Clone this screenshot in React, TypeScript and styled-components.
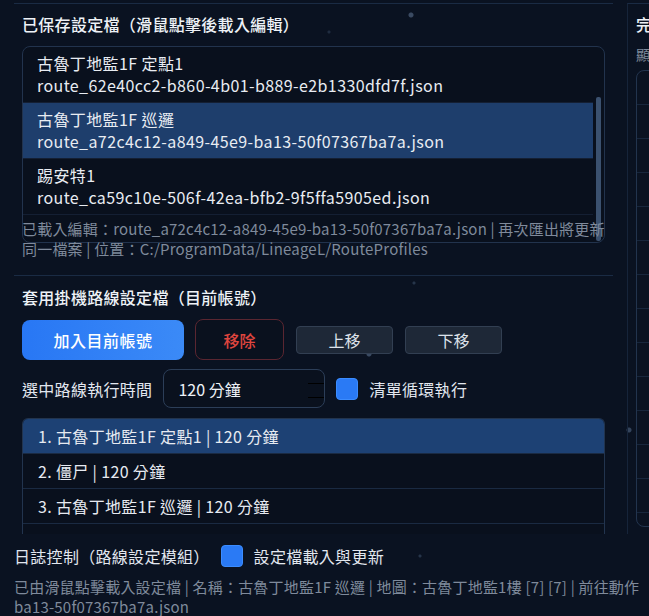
import React, { useState } from "react";
import styled, { createGlobalStyle } from "styled-components";

const GlobalStyle = createGlobalStyle`
  html, body {
    margin: 0;
    overflow: hidden;
    background-color: #0a1221;
    background-image:
      radial-gradient(circle at 411px 15px, #3a4a62 2px, transparent 3px),
      radial-gradient(circle at 369px 354px, #3a4a62 2px, transparent 3px),
      radial-gradient(circle at 629px 430px, #34445c 2px, transparent 3px),
      radial-gradient(circle at 414px 283px, #26354a 1px, transparent 2px),
      radial-gradient(circle at 420px 556px, #26354a 1px, transparent 2px),
      radial-gradient(circle at 329px 32px, #1f2c40 1px, transparent 2px);
  }
  body {
    font-family: "Noto Sans CJK TC", "Noto Sans", sans-serif;
    color: #e4e9f1;
  }
`;

const Page = styled.div`
  display: flex;
  flex-direction: column;
  width: 960px;
  padding: 3px 0 0 14px;
`;

const Main = styled.div`
  display: flex;
  gap: 14px;
`;

const LeftPanel = styled.div`
  width: 599px;
  display: flex;
  flex-direction: column;
`;

const Section = styled.div<{ $padTop: number; $padBottom: number }>`
  display: flex;
  flex-direction: column;
  border-top: 1px solid #1a2b44;
  padding: ${(p) => p.$padTop}px 8px ${(p) => p.$padBottom}px;
`;

const Title = styled.div`
  font-size: 16px;
  line-height: 22px;
  font-weight: 500;
  letter-spacing: 0.3px;
  color: #eef2f7;
  white-space: nowrap;
`;

const ProfileList = styled.div`
  display: flex;
  margin-top: 11px;
  height: 197px;
  box-sizing: border-box;
  border: 1px solid #22334d;
  border-radius: 8px;
  background: #09101d;
  overflow: hidden;
`;

const ProfileItems = styled.div`
  flex: 1;
  display: flex;
  flex-direction: column;
`;

const ProfileItem = styled.div<{ $selected?: boolean }>`
  padding: 5px 14px 6px;
  font-size: 16px;
  line-height: 22px;
  letter-spacing: 0.4px;
  color: #e8ecf2;
  background: ${(p) => (p.$selected ? "#1e3e6c" : "transparent")};
  border-bottom: 1px solid #141f33;
  cursor: pointer;
  white-space: nowrap;
`;

const ScrollTrack = styled.div`
  width: 11px;
  display: flex;
  justify-content: center;
`;

const ScrollThumb = styled.div`
  width: 5px;
  height: 144px;
  margin-top: 50px;
  border-radius: 2px;
  background: #3b516f;
`;

const MutedText = styled.div`
  font-size: 15px;
  line-height: 20px;
  letter-spacing: 0.2px;
  color: #7f8a9b;
  white-space: nowrap;
`;

const StatusText = styled(MutedText)`
  margin-top: -24px;
`;

const Line = styled.span`
  display: block;
`;

const ButtonRow = styled.div`
  display: flex;
  align-items: center;
  gap: 11px;
  margin-top: 11px;
`;

const PrimaryButton = styled.button`
  width: 162px;
  height: 40px;
  border: none;
  border-radius: 8px;
  background: linear-gradient(90deg, #2877f4, #3b8af7);
  color: #ffffff;
  font: 500 16px "Noto Sans CJK TC", sans-serif;
  letter-spacing: 0.5px;
  cursor: pointer;
`;

const DangerButton = styled.button`
  width: 89px;
  height: 41px;
  border: 1px solid #5a2631;
  border-radius: 8px;
  background: #0a111e;
  color: #e0463f;
  font: 500 16px "Noto Sans CJK TC", sans-serif;
  cursor: pointer;
`;

const SecondaryButton = styled.button`
  width: 97px;
  height: 28px;
  margin-left: 1px;
  border: 1px solid #323f52;
  border-radius: 4px;
  background: #1e2837;
  color: #dde2ea;
  font: 16px "Noto Sans CJK TC", sans-serif;
  cursor: pointer;
`;

const TimeRow = styled.div`
  display: flex;
  align-items: center;
  margin-top: 9px;
`;

const Label = styled.span`
  font-size: 16px;
  letter-spacing: 0.3px;
  color: #e2e7ef;
  white-space: nowrap;
`;

const TimeInput = styled.div`
  position: relative;
  display: flex;
  align-items: center;
  width: 162px;
  height: 39px;
  margin-left: 11px;
  box-sizing: border-box;
  padding-left: 14px;
  border: 1px solid #2c3e58;
  border-radius: 8px;
  background: #0a111e;
  font-size: 16px;
  color: #eef2f7;
`;

const SpinStub = styled.span`
  position: absolute;
  right: 0;
  top: 13px;
  width: 16px;
  height: 13px;
  border-top: 1px solid #000000;
  border-bottom: 1px solid #000000;
`;

const Check = styled.span`
  width: 22px;
  height: 22px;
  margin: 0 11px;
  box-sizing: border-box;
  border: 1px solid #3b8cff;
  border-radius: 4px;
  background: #2a7af5;
  flex-shrink: 0;
`;

const QueueBox = styled.div`
  margin-top: 10px;
  height: 116px;
  box-sizing: border-box;
  border: 1px solid #22344e;
  border-bottom: none;
  border-radius: 6px 6px 0 0;
  overflow: hidden;
  background: #09101d;
`;

const QueueItem = styled.div<{ $selected?: boolean }>`
  padding: 6px 15px;
  font-size: 16px;
  line-height: 22px;
  letter-spacing: 0.35px;
  color: #e6eaf1;
  background: ${(p) => (p.$selected ? "#1d4174" : "transparent")};
  border-bottom: 1px solid #1a2a42;
  white-space: nowrap;
`;

const RightPanel = styled.div`
  width: 320px;
  display: flex;
  flex-direction: column;
  border-top: 1px solid #1a2b44;
  border-left: 1px solid #16243a;
  padding: 9px 8px 0;
`;

const SubText = styled.div`
  margin-top: 9px;
  font-size: 14px;
  line-height: 20px;
  color: #7f8a9b;
  white-space: nowrap;
`;

const StepTable = styled.div`
  margin-top: 6px;
  height: 457px;
  box-sizing: border-box;
  border: 1px solid #22344e;
  border-radius: 8px;
  overflow: hidden;
`;

const StepRow = styled.div`
  height: 34px;
  box-sizing: border-box;
  border-bottom: 1px solid #17263c;
`;

const Footer = styled.div`
  display: flex;
  flex-direction: column;
  margin-top: 10px;
`;

const LogRow = styled.div`
  display: flex;
  align-items: center;
  height: 24px;
`;

const LogText = styled(MutedText)`
  margin-top: 9px;
`;

const profiles = [
  { name: "古魯丁地監1F 定點1", file: "route_62e40cc2-b860-4b01-b889-e2b1330dfd7f.json" },
  { name: "古魯丁地監1F 巡邏", file: "route_a72c4c12-a849-45e9-ba13-50f07367ba7a.json" },
  { name: "踢安特1", file: "route_ca59c10e-506f-42ea-bfb2-9f5ffa5905ed.json" },
];

const queue = [
  "1. 古魯丁地監1F 定點1 | 120 分鐘",
  "2. 僵尸 | 120 分鐘",
  "3. 古魯丁地監1F 巡邏 | 120 分鐘",
  "",
];

export default function App() {
  const [selectedProfile, setSelectedProfile] = useState(1);
  const [selectedQueue, setSelectedQueue] = useState(0);

  return (
    <>
      <GlobalStyle />
      <Page>
        <Main>
          <LeftPanel>
            <Section $padTop={9} $padBottom={16}>
              <Title>已保存設定檔（滑鼠點擊後載入編輯）</Title>
              <ProfileList>
                <ProfileItems>
                  {profiles.map((p, i) => (
                    <ProfileItem
                      key={p.file}
                      $selected={i === selectedProfile}
                      onClick={() => setSelectedProfile(i)}
                    >
                      <Line>{p.name}</Line>
                      <Line>{p.file}</Line>
                    </ProfileItem>
                  ))}
                </ProfileItems>
                <ScrollTrack>
                  <ScrollThumb />
                </ScrollTrack>
              </ProfileList>
              <StatusText>
                <Line>
                  已載入編輯：{profiles[selectedProfile].file} | 再次匯出將更新
                </Line>
                <Line>同一檔案 | 位置：C:/ProgramData/LineageL/RouteProfiles</Line>
              </StatusText>
            </Section>
            <Section $padTop={10} $padBottom={0}>
              <Title>套用掛機路線設定檔（目前帳號）</Title>
              <ButtonRow>
                <PrimaryButton>加入目前帳號</PrimaryButton>
                <DangerButton>移除</DangerButton>
                <SecondaryButton>上移</SecondaryButton>
                <SecondaryButton>下移</SecondaryButton>
              </ButtonRow>
              <TimeRow>
                <Label>選中路線執行時間</Label>
                <TimeInput>
                  120 分鐘
                  <SpinStub />
                </TimeInput>
                <Check />
                <Label>清單循環執行</Label>
              </TimeRow>
              <QueueBox>
                {queue.map((q, i) => (
                  <QueueItem
                    key={i}
                    $selected={i === selectedQueue}
                    onClick={() => setSelectedQueue(i)}
                  >
                    {q || "\u00a0"}
                  </QueueItem>
                ))}
              </QueueBox>
            </Section>
          </LeftPanel>
          <RightPanel>
            <Title>完整路線步驟</Title>
            <SubText>顯示目前載入設定檔的所有步驟</SubText>
            <StepTable>
              {Array.from({ length: 14 }).map((_, i) => (
                <StepRow key={i} />
              ))}
            </StepTable>
          </RightPanel>
        </Main>
        <Footer>
          <LogRow>
            <Label>日誌控制（路線設定模組）</Label>
            <Check />
            <Label>設定檔載入與更新</Label>
          </LogRow>
          <LogText>
            <Line>
              已由滑鼠點擊載入設定檔 | 名稱：古魯丁地監1F 巡邏 | 地圖：古魯丁地監1樓 [7] [7] | 前往動作
            </Line>
            <Line>ba13-50f07367ba7a.json</Line>
          </LogText>
        </Footer>
      </Page>
    </>
  );
}
